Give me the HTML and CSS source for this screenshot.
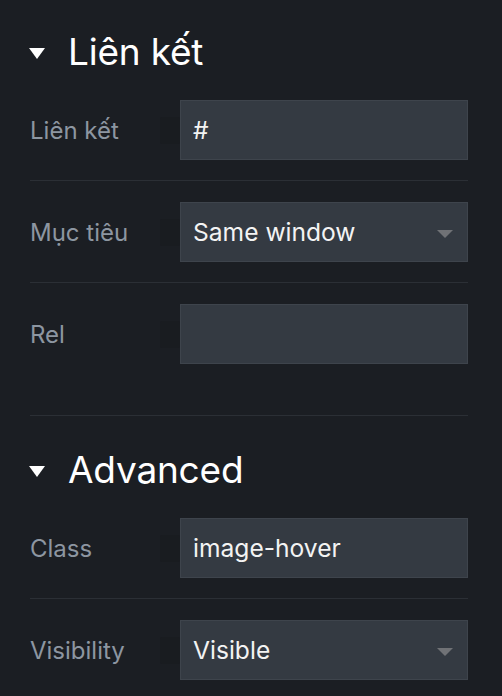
FILE: index.html
```html
<!DOCTYPE html>
<html lang="vi">
<head>
<meta charset="utf-8">
<title>Panel</title>
<link rel="stylesheet" href="styles.css">
</head>
<body>
<div class="panel">
  <section class="section">
    <h2 class="section-title"><span class="caret"></span>Liên kết</h2>
    <div class="row">
      <div class="label"><span>Liên kết</span><span class="ghost"></span></div>
      <div class="field">#</div>
    </div>
    <div class="row">
      <div class="label"><span>Mục tiêu</span><span class="ghost"></span></div>
      <div class="field select">Same window<span class="arrow"></span></div>
    </div>
    <div class="row">
      <div class="label"><span>Rel</span><span class="ghost"></span></div>
      <div class="field"></div>
    </div>
  </section>
  <section class="section">
    <h2 class="section-title"><span class="caret"></span>Advanced</h2>
    <div class="row">
      <div class="label"><span>Class</span><span class="ghost"></span></div>
      <div class="field">image-hover</div>
    </div>
    <div class="row">
      <div class="label"><span>Visibility</span><span class="ghost"></span></div>
      <div class="field select">Visible<span class="arrow"></span></div>
    </div>
  </section>
</div>
</body>
</html>
```

FILE: styles.css
```css
* { box-sizing: border-box; }
html, body {
  margin: 0;
  padding: 0;
  background: #1b1e23;
  font-family: Inter, "Noto Sans", "Liberation Sans", sans-serif;
  overflow: hidden;
}
.panel {
  padding: 0 34px 0 30px;
}
.section {
  padding-top: 30px;
  padding-bottom: 31px;
  border-bottom: 1px solid #2b2f35;
}
.section + .section {
  padding-top: 32px;
}
.section-title {
  margin: 0 0 5px 0;
  display: flex;
  align-items: center;
  font-size: 37px;
  font-weight: 400;
  line-height: 44px;
  height: 44px;
  color: #ffffff;
  letter-spacing: -0.2px;
}
.caret {
  width: 0;
  height: 0;
  border-left: 8px solid transparent;
  border-right: 8px solid transparent;
  border-top: 11px solid #ffffff;
  margin: 3px 23px 0 -1px;
}
.row {
  display: flex;
  align-items: center;
  padding: 21px 0 20px;
  border-bottom: 1px solid #2b2f35;
}
.row:last-child {
  border-bottom: none;
}
.label {
  width: 150px;
  flex: none;
  display: flex;
  align-items: center;
  justify-content: space-between;
  font-size: 24px;
  color: #8d96a1;
}
.ghost {
  width: 20px;
  height: 27px;
  background: #191c20;
  border-radius: 2px;
}
.field {
  flex: 1;
  height: 60px;
  background: #343a42;
  border: 1px solid #3e444c;
  display: flex;
  align-items: center;
  padding-left: 12px;
  font-size: 24.6px;
  color: #f3f3f3;
  position: relative;
}
.arrow {
  position: absolute;
  right: 14px;
  top: 27px;
  width: 0;
  height: 0;
  border-left: 8px solid transparent;
  border-right: 8px solid transparent;
  border-top: 8px solid #707276;
}
```
